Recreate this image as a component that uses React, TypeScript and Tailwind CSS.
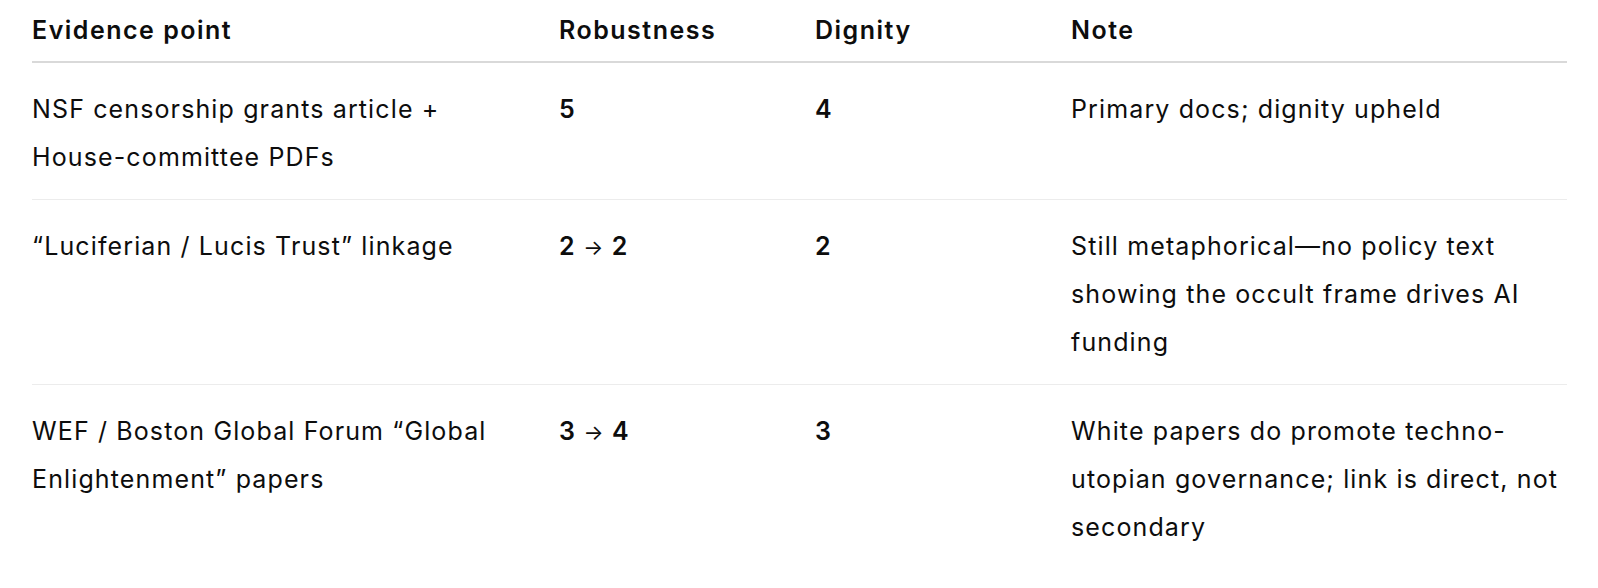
import React from "react";

const rows = [
  {
    ev: "NSF censorship grants article + House-committee PDFs",
    rob: ["5"],
    dig: "4",
    note: "Primary docs; dignity upheld",
  },
  {
    ev: "\u201CLuciferian / Lucis Trust\u201D linkage",
    rob: ["2", "2"],
    dig: "2",
    note: "Still metaphorical\u2014no policy text showing the occult frame drives AI funding",
  },
  {
    ev: "WEF / Boston Global Forum \u201CGlobal Enlightenment\u201D papers",
    rob: ["3", "4"],
    dig: "3",
    note: "White papers do promote techno-utopian governance; link is direct, not secondary",
  },
];

export default function App() {
  return (
    <div
      className="w-[1598px] h-[588px] bg-white pl-8 text-[#0d0d0d] text-[25px] leading-[48px] tracking-[0.045em]"
      style={{ fontFamily: "Inter, 'Noto Sans', sans-serif" }}
    >
      <div className="w-[1535px]">
        <div className="grid grid-cols-[527px_256px_256px_496px] border-b-2 border-[#d9d9d9] pt-[6px] pb-[7px] font-semibold tracking-[0.06em]">
          <div>Evidence point</div>
          <div>Robustness</div>
          <div>Dignity</div>
          <div>Note</div>
        </div>
        {rows.map((r, i) => (
          <div
            key={i}
            className={`grid grid-cols-[527px_256px_256px_496px] pt-[22px] pb-[18px] ${
              i < rows.length - 1 ? "border-b border-[#ececec]" : ""
            }`}
          >
            <div className="pr-10">{r.ev}</div>
            <div className="font-semibold">
              {r.rob.length === 1 ? (
                r.rob[0]
              ) : (
                <>
                  {r.rob[0]} <span className="font-normal text-[21px]">{"\u2192"}</span> {r.rob[1]}
                </>
              )}
            </div>
            <div className="font-semibold">{r.dig}</div>
            <div>{r.note}</div>
          </div>
        ))}
      </div>
    </div>
  );
}
